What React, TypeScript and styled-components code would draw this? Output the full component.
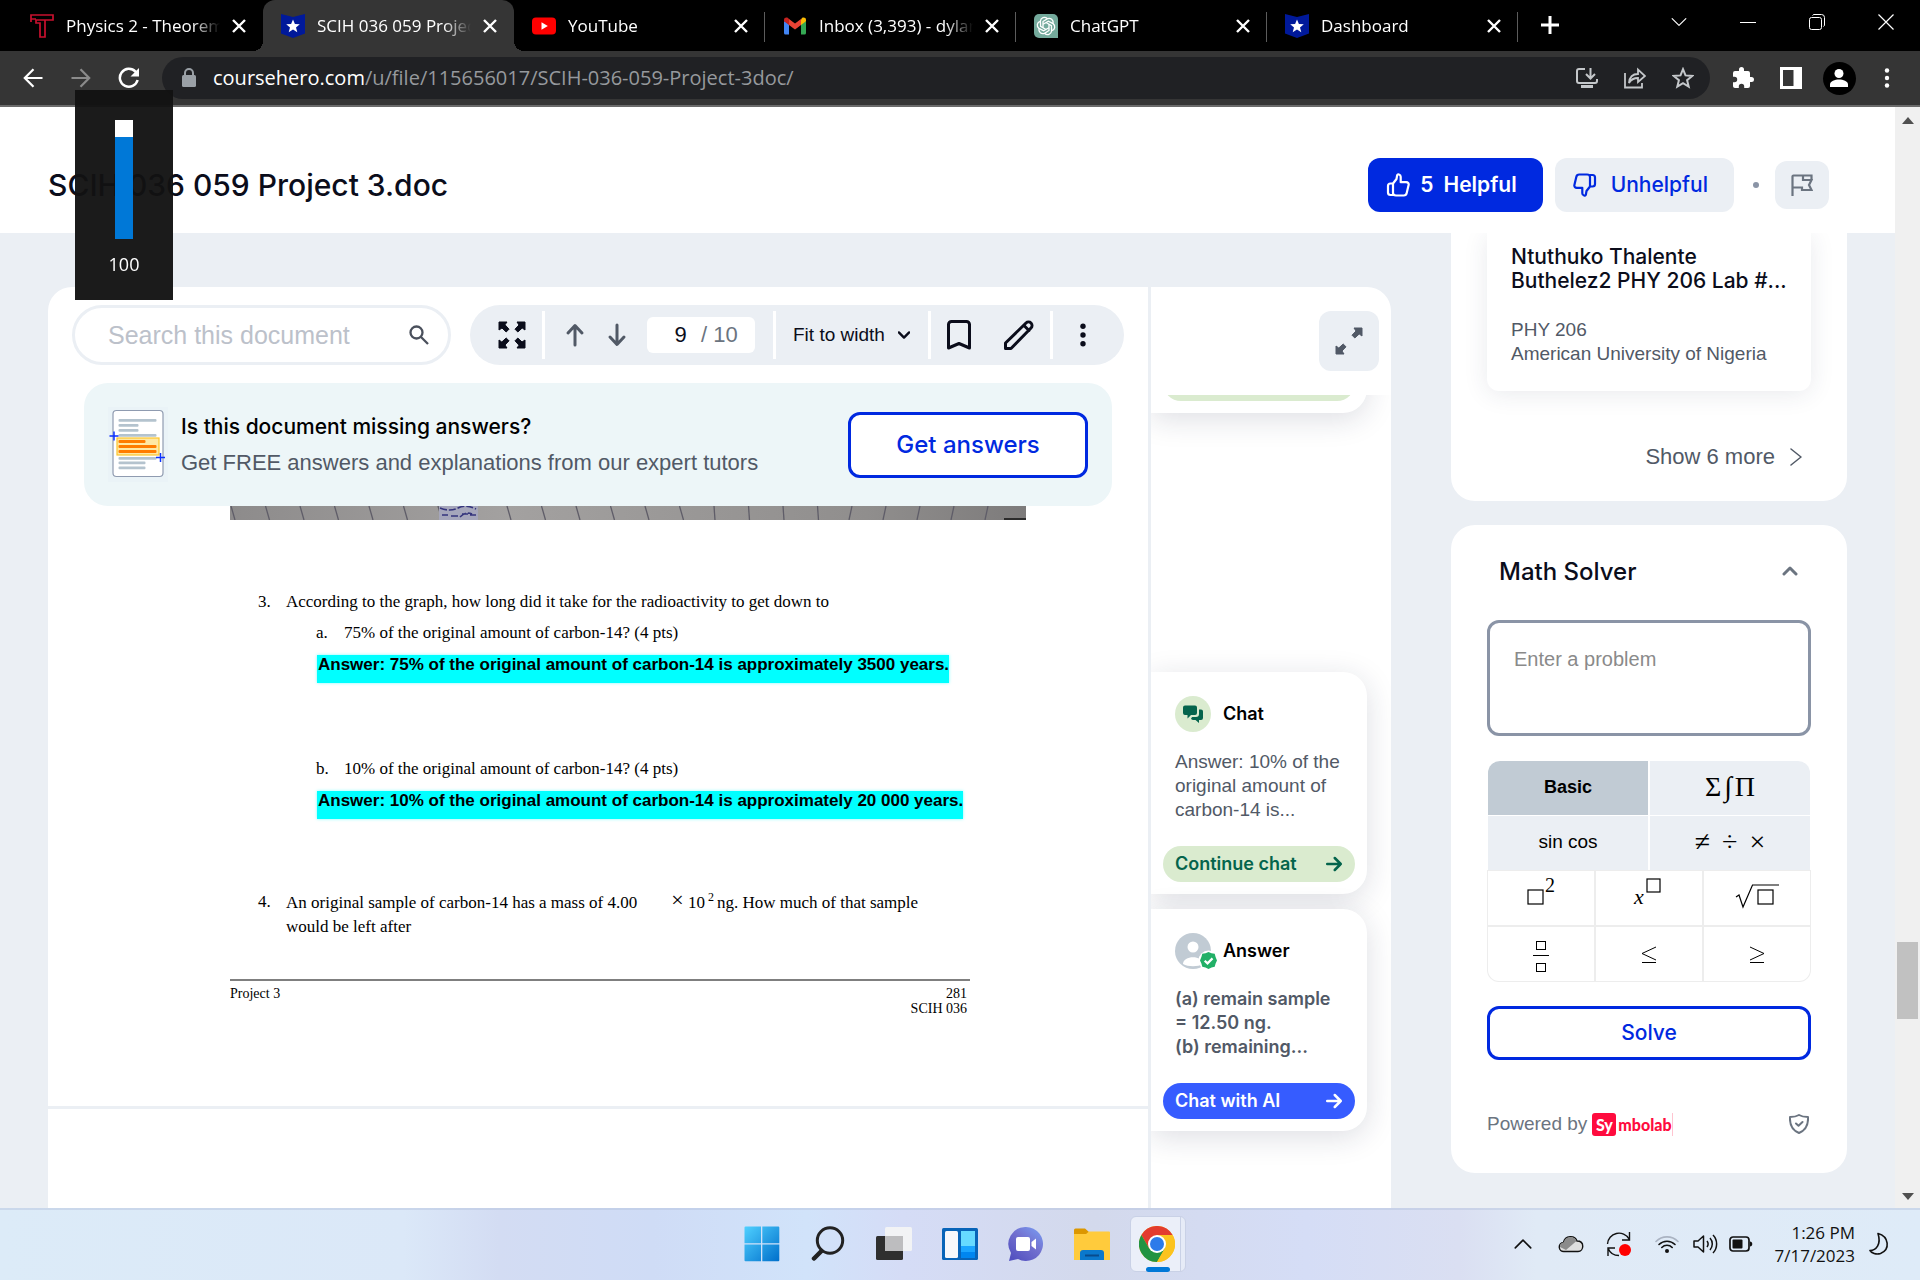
import React from "react";
import styled, { createGlobalStyle, css } from "styled-components";

const inter = `Inter, "Liberation Sans", sans-serif`;
const sans = `"Liberation Sans", Arial, sans-serif`;
const system = `"Open Sans", "Noto Sans", sans-serif`;
const serif = `"Liberation Serif", "Times New Roman", serif`;

const blue = "#0029e0";
const ink = "#0b0d1b";
const slate = "#515966";
const mist = "#ebeff4";

const GlobalStyle = createGlobalStyle`
  *, *::before, *::after { box-sizing: border-box; }
  body { margin: 0; background: ${mist}; font-family: ${sans}; color: ${ink}; overflow: hidden; }
  button { border: 0; padding: 0; background: none; font: inherit; color: inherit; cursor: pointer; }
  h1, h2, h3, p, ol { margin: 0; padding: 0; font-weight: 400; }
  a { color: inherit; text-decoration: none; }
  svg { display: block; flex: none; }
`;

const Screen = styled.div`
  height: 100vh;
  display: flex;
  flex-direction: column;
`;

/* ---------- browser frame ---------- */

const TabStrip = styled.div`
  flex: none;
  height: 51px;
  display: flex;
  background: #000;
  color: #fff;
  padding-left: 12px;
`;

const Tab = styled.div<{ $active?: boolean; $divider?: boolean }>`
  position: relative;
  width: 251px;
  display: flex;
  align-items: center;
  gap: 12px;
  padding: 0 17px 0 18px;
  ${(p) =>
    p.$active &&
    css`
      background: #353535;
      border-radius: 12px 12px 0 0;
      &::before,
      &::after {
        content: "";
        position: absolute;
        bottom: 0;
        width: 10px;
        height: 10px;
      }
      &::before {
        right: 100%;
        background: radial-gradient(circle at 0 0, transparent 10px, #353535 10px);
      }
      &::after {
        left: 100%;
        background: radial-gradient(circle at 100% 0, transparent 10px, #353535 10px);
      }
    `}
  ${(p) =>
    p.$divider &&
    css`
      &::after {
        content: "";
        position: absolute;
        right: 0;
        top: 12px;
        height: 30px;
        width: 1px;
        background: #5c5c5c;
      }
    `}
`;

const TabTitle = styled.span`
  flex: 1;
  min-width: 0;
  overflow: hidden;
  white-space: nowrap;
  font: 17px/24px ${system};
  mask-image: linear-gradient(90deg, #000 82%, transparent 100%);
`;

const IconButton = styled.button<{ $w?: number; $h?: number }>`
  flex: none;
  width: ${(p) => p.$w ?? 48}px;
  height: ${(p) => p.$h ?? 42}px;
  display: flex;
  align-items: center;
  justify-content: center;
`;

const NewTab = styled(IconButton)`
  margin: 4px 0 0 8px;
`;

const WindowButtons = styled.div`
  display: flex;
  margin-left: auto;
`;

const AddressRow = styled.div`
  flex: none;
  height: 56px;
  display: flex;
  align-items: center;
  padding: 0 9px;
  background: #353535;
  border-bottom: 2px solid #6a6a6a;
  color: #fff;
`;

const Omnibox = styled.div`
  flex: 1;
  min-width: 0;
  height: 42px;
  margin: 0 9px;
  padding: 0 3px 0 19px;
  display: flex;
  align-items: center;
  gap: 16px;
  border-radius: 21px;
  background: #202124;
  color: #c4c7ca;
`;

const Address = styled.div`
  flex: 1;
  min-width: 0;
  white-space: nowrap;
  font: 20px/28px ${system};
  color: #96999d;
  b { font-weight: 400; color: #fff; }
`;

const OmniActions = styled.div`
  display: flex;
`;

const Avatar = styled.span`
  width: 33px;
  height: 33px;
  border-radius: 50%;
  background: #000;
  display: grid;
  place-items: center;
`;

/* ---------- page frame ---------- */

const Viewport = styled.div`
  flex: 1;
  min-height: 0;
  display: flex;
  background: ${mist};
`;

const Page = styled.main`
  flex: 1;
  min-width: 0;
  display: flex;
  flex-direction: column;
  overflow: hidden;
`;

const Scrollbar = styled.div`
  flex: none;
  width: 25px;
  background: #f0f0f0;
  display: flex;
  flex-direction: column;
  align-items: center;
  padding: 9px 0 7px;
`;

const Thumb = styled.div`
  width: 21px;
  height: 77px;
  margin-top: auto;
  margin-bottom: 174px;
  background: #c1c1c1;
`;

const PageHeader = styled.header`
  flex: none;
  height: 126px;
  padding: 30px 66px 0 48px;
  display: flex;
  align-items: center;
  background: #fff;
`;

const Title = styled.h1`
  flex: 1;
  font: 500 30px/42px ${inter};
`;

const RateButton = styled.button<{ $filled?: boolean }>`
  height: 54px;
  padding: 0 26px 0 18px;
  display: flex;
  align-items: center;
  gap: ${(p) => (p.$filled ? 10 : 14)}px;
  border-radius: 12px;
  background: ${(p) => (p.$filled ? blue : mist)};
  color: ${(p) => (p.$filled ? "#fff" : blue)};
  font: ${(p) => (p.$filled ? 600 : 500)} 21px/30px ${inter};
  & + & { margin-left: 12px; }
`;

const Dot = styled.span`
  width: 6px;
  height: 6px;
  margin: 0 16px 0 19px;
  border-radius: 50%;
  background: #8a94a6;
`;

const SoftButton = styled.button<{ $size: number; $h: number }>`
  width: ${(p) => p.$size}px;
  height: ${(p) => p.$h}px;
  display: grid;
  place-items: center;
  border-radius: 12px;
  background: ${mist};
  color: ${slate};
`;

const Columns = styled.div`
  flex: 1;
  min-height: 0;
  display: flex;
  align-items: stretch;
  gap: 60px;
  padding: 0 48px;
`;

/* ---------- document viewer ---------- */

const Viewer = styled.section`
  flex: 1;
  min-width: 0;
  margin-top: 54px;
  display: flex;
  border-radius: 24px 24px 0 0;
  background: #fff;
  overflow: hidden;
`;

const Reader = styled.div`
  flex: 1;
  min-width: 0;
  display: flex;
  flex-direction: column;
`;

const ToolRow = styled.div`
  display: flex;
  gap: 19px;
  padding: 18px 24px;
`;

const SearchBox = styled.label`
  width: 379px;
  height: 60px;
  display: flex;
  align-items: center;
  padding: 0 19px 0 33px;
  border: 3px solid ${mist};
  border-radius: 30px;
  color: #4a505c;
`;

const SearchInput = styled.input`
  flex: 1;
  min-width: 0;
  border: 0;
  padding: 0;
  outline: 0;
  background: none;
  font: 25px/36px ${sans};
  &::placeholder { color: #bcc1ca; opacity: 1; }
`;

const ToolPill = styled.div`
  flex: 1;
  height: 60px;
  display: flex;
  align-items: center;
  border-radius: 30px;
  background: ${mist};
`;

const ToolGroup = styled.div<{ $pad: string; $gap?: number; $grow?: boolean }>`
  height: 48px;
  flex: ${(p) => (p.$grow ? 1 : "none")};
  display: flex;
  align-items: center;
  gap: ${(p) => p.$gap ?? 0}px;
  padding: ${(p) => p.$pad};
  & + & { border-left: 3px solid #fff; }
`;

const PageBox = styled.label`
  width: 108px;
  height: 36px;
  display: flex;
  align-items: center;
  border-radius: 6px;
  background: #fff;
  font: 22px/30px ${sans};
  color: #6b7480;
`;

const PageInput = styled.input`
  width: 54px;
  padding: 0 0 0 13px;
  border: 0;
  outline: 0;
  background: none;
  text-align: center;
  font: inherit;
  color: ${ink};
`;

const ZoomSelect = styled.select`
  flex: 1;
  min-width: 0;
  appearance: none;
  border: 0;
  padding: 0;
  outline: 0;
  background: none;
  font: 19px/24px ${sans};
  color: ${ink};
`;

const Banner = styled.aside`
  height: 123px;
  margin: 0 36px;
  padding: 0 24px;
  display: flex;
  align-items: center;
  gap: 13px;
  border-radius: 24px;
  background: #edf6f8;
`;

const BannerText = styled.div`
  flex: 1;
`;

const BannerTitle = styled.h2`
  font: 500 21px/36px ${inter};
  color: #000;
`;

const BannerNote = styled.p`
  font: 22px/36px ${sans};
  color: ${slate};
`;

const OutlineButton = styled.button<{ $w?: string; $h: number; $size: number }>`
  width: ${(p) => p.$w ?? "100%"};
  height: ${(p) => p.$h}px;
  border: 3px solid ${blue};
  border-radius: 12px;
  background: #fff;
  color: ${blue};
  font: 500 ${(p) => p.$size}px/30px ${inter};
`;

const Sheet = styled.article`
  padding: 0 122px 90px 182px;
  border-bottom: 3px solid ${mist};
  font: 17px/24px ${serif};
  color: #000;
`;

const Line = styled.p<{ $top: number; $inset?: number }>`
  display: grid;
  grid-template-columns: 28px 1fr;
  margin-top: ${(p) => p.$top}px;
  padding-left: ${(p) => (p.$inset ? 86 : 28)}px;
`;

const Highlight = styled.p`
  width: fit-content;
  margin: 10px 0 0 87px;
  padding: 0 0 8px 1px;
  background: #00ffff;
  box-shadow: 0 0 3px #7dfbff;
  font: bold 17px/20px ${sans};
`;

const Times = styled.span`
  margin-left: 34px;
  font-size: 22px;
  line-height: 20px;
  vertical-align: 1px;
`;

const Sup = styled.sup`
  margin: 0 3px;
  font-size: 12px;
  line-height: 12px;
`;

const SheetFooter = styled.footer`
  width: 740px;
  margin-top: 40px;
  padding-top: 5px;
  display: flex;
  justify-content: space-between;
  border-top: 2px solid #7f7f7f;
  font: 14px/15px ${serif};
`;

const FooterRight = styled.div`
  padding-right: 3px;
  text-align: right;
`;

/* ---------- chat rail ---------- */

const Rail = styled.div`
  flex: none;
  width: 243px;
  display: flex;
  flex-direction: column;
  border-left: 3px solid ${mist};
`;

const RailTop = styled.div`
  flex: none;
  height: 108px;
  padding: 24px 12px;
  display: flex;
  justify-content: flex-end;
`;

const RailFeed = styled.div`
  flex: 1;
  min-height: 0;
  overflow: hidden;
`;

const ChatCard = styled.section<{ $top: number }>`
  width: 216px;
  height: 222px;
  margin-top: ${(p) => p.$top}px;
  padding: 24px 12px 12px;
  display: flex;
  flex-direction: column;
  border-radius: 0 24px 24px 0;
  background: #fff;
  box-shadow: 0 6px 30px rgba(30, 36, 70, 0.15);
`;

const ChatHead = styled.h3`
  height: 36px;
  padding-left: 12px;
  display: flex;
  align-items: center;
  gap: 12px;
  font: 600 18px/24px ${inter};
  color: #000;
`;

const ChatText = styled.p<{ $bold?: boolean }>`
  margin: 18px 0 24px;
  padding-left: 12px;
  white-space: nowrap;
  font: ${(p) => (p.$bold ? `600 18px/24px ${inter}` : `19px/24px ${sans}`)};
  color: ${slate};
`;

const ChatButton = styled.button<{ $tone: "green" | "blue" }>`
  height: 36px;
  padding: 0 12px;
  display: flex;
  align-items: center;
  justify-content: space-between;
  border-radius: 18px;
  background: ${(p) => (p.$tone === "green" ? "#daebcf" : "#365cff")};
  color: ${(p) => (p.$tone === "green" ? "#04644c" : "#fff")};
  font: 600 18px/24px ${inter};
`;

/* ---------- sidebar ---------- */

const Sidebar = styled.div`
  flex: none;
  width: 396px;
`;

const RelatedPanel = styled.section`
  height: 268px;
  padding: 0 36px;
  border-radius: 0 0 24px 24px;
  background: #fff;
  overflow: hidden;
`;

const RelatedCard = styled.a`
  display: block;
  padding: 12px 20px 25px 24px;
  border-radius: 0 0 12px 12px;
  box-shadow: 0 3px 24px rgba(40, 50, 80, 0.1);
`;

const RelatedTitle = styled.h2`
  font: 500 21px/24px ${inter};
`;

const RelatedMeta = styled.p`
  margin-top: 25px;
  font: 19px/24px ${sans};
  color: ${slate};
`;

const ShowMore = styled.button`
  margin: 54px 9px 0 auto;
  display: flex;
  align-items: center;
  gap: 15px;
  font: 22px/24px ${sans};
  color: ${slate};
`;

const SolverPanel = styled.section`
  margin-top: 24px;
  padding: 29px 36px 36px;
  border-radius: 24px;
  background: #fff;
`;

const SolverHead = styled.div`
  padding: 0 13px 0 12px;
  display: flex;
  align-items: center;
  justify-content: space-between;
`;

const SolverTitle = styled.h2`
  font: 500 24px/36px ${inter};
`;

const Problem = styled.textarea`
  display: block;
  width: 100%;
  height: 116px;
  margin-top: 30px;
  padding: 24px;
  border: 3px solid #8a94a6;
  border-radius: 12px;
  outline: 0;
  resize: none;
  font: 20px/24px ${sans};
  &::placeholder { color: #8a8a8a; opacity: 1; }
`;

const KindGrid = styled.div`
  margin: 25px 1px 0;
  display: grid;
  grid-template-columns: 1fr 1fr;
  gap: 1px 2px;
  border-radius: 12px 12px 0 0;
  overflow: hidden;
`;

const Kind = styled.button<{ $on?: boolean; $math?: boolean; $gap?: number }>`
  height: 54px;
  padding-bottom: 2px;
  display: flex;
  align-items: center;
  justify-content: center;
  gap: ${(p) => p.$gap ?? 0}px;
  background: ${(p) => (p.$on ? "#c1cbd4" : mist)};
  font: ${(p) => (p.$math ? `28px/30px ${serif}` : `${p.$on ? "bold 18px" : "19px"}/24px ${sans}`)};
  color: #000;
`;

const KeyGrid = styled.div`
  display: grid;
  grid-template-columns: repeat(3, 1fr);
  gap: 2px;
  padding: 1px;
  border-radius: 0 0 12px 12px;
  background: #ededed;
  overflow: hidden;
`;

const Key = styled.button`
  height: 54px;
  display: grid;
  place-items: center;
  background: #fff;
  &:nth-child(4) { border-bottom-left-radius: 11px; }
  &:nth-child(6) { border-bottom-right-radius: 11px; }
`;

const SolveWrap = styled.div`
  margin: 24px 0 51px;
  display: flex;
`;

const Powered = styled.div`
  display: flex;
  align-items: center;
  height: 26px;
  font: 19px/24px ${sans};
  color: #6b7480;
  svg { margin-left: auto; margin-right: 2px; }
`;

const BrandLink = styled.a`
  margin-left: 5px;
  display: flex;
  align-items: center;
  gap: 2px;
  font: 900 16px/23px Lato, ${sans};
  color: #ff0b3e;
  border-right: 1px solid #ffc4d0;
`;

const BrandMark = styled.span`
  width: 24px;
  height: 23px;
  border-radius: 3px;
  background: #ff0b3e;
  color: #fff;
  text-align: center;
`;

/* ---------- volume flyout ---------- */

const Flyout = styled.div`
  position: fixed;
  left: 75px;
  top: 90px;
  width: 98px;
  height: 210px;
  padding-top: 30px;
  display: flex;
  flex-direction: column;
  align-items: center;
  background: rgba(18, 18, 18, 0.96);
  color: #fff;
  font: 18px/24px ${system};
`;

const Level = styled.div`
  width: 18px;
  height: 119px;
  margin-bottom: 13px;
  border-top: 17px solid #fff;
  background: #0078d7;
`;

/* ---------- taskbar ---------- */

const Taskbar = styled.footer`
  flex: none;
  height: 72px;
  display: grid;
  grid-template-columns: 1fr auto 1fr;
  align-items: center;
  background: linear-gradient(90deg, #dcebf8 0%, #dbe8f8 21%, #d3dcf3 26%, #cfdcf6 34%, #d1e3fa 42%, #d5dcf6 47%, #d3d9ec 57%, #d5ddf6 68%, #dadff2 76%, #e0eaf6 80%, #deebf8 100%);
  box-shadow: inset 0 2px 0 rgba(180, 192, 220, 0.45);
  color: #111;
`;

const Dock = styled.nav`
  grid-column: 2;
  display: flex;
  gap: 10px;
`;

const DockButton = styled.button<{ $open?: boolean }>`
  position: relative;
  width: 56px;
  height: 56px;
  display: grid;
  place-items: center;
  ${(p) =>
    p.$open &&
    css`
      border: 1px solid #c9d1e6;
      border-radius: 6px;
      background: linear-gradient(90deg, #ebeff9 49px, #c9d1e6 49px, #c9d1e6 50px, #e6ebf7 50px);
      padding-right: 2px;
      &::after {
        content: "";
        position: absolute;
        left: 15px;
        bottom: -1px;
        width: 24px;
        height: 5px;
        border-radius: 3px;
        background: #0078d7;
      }
    `}
`;

const Tray = styled.div`
  padding-right: 29px;
  display: flex;
  align-items: center;
  justify-content: flex-end;
`;

const TraySlot = styled.span<{ $w: number }>`
  width: ${(p) => p.$w}px;
  display: grid;
  place-items: center;
`;

const Clock = styled.div`
  width: 92px;
  margin-right: 12px;
  text-align: right;
  font: 17px/23px ${system};
`;

/* ---------- drawings ---------- */

const stroke = (w: number) => ({ fill: "none", stroke: "currentColor", strokeWidth: w, strokeLinecap: "round" as const, strokeLinejoin: "round" as const });

const CloseX = () => (
  <svg width="14" height="14" viewBox="0 0 14 14" fill="none" stroke="#fff" strokeWidth="2.4"><path d="M1 1l12 12M13 1L1 13" /></svg>
);
const HeroIcon = () => (
  <svg width="24" height="24" viewBox="0 0 24 24"><path d="M0 0l12 3 12-3v19.500l-12 4.500-12-4.500z" fill="#00199a" /><path d="M12 5.500l1.900 4.500 4.900.3-3.800 3.100 1.300 4.800-4.300-2.700-4.300 2.700 1.300-4.800L5.200 10.300l4.900-.3z" fill="#fff" /></svg>
);
const TheoremIcon = () => (
  <svg width="24" height="24" viewBox="0 0 24 24" fill="none" stroke="#c8102e" strokeWidth="1.700"><path d="M1 8V1h22v5H15v17h-5V9H6V6h9M1 5h5" /></svg>
);
const YouTubeIcon = () => (
  <svg width="24" height="24" viewBox="0 0 24 24"><rect y="3.500" width="24" height="17" rx="4" fill="#f00" /><path d="M9.500 8.300v7.400L15.800 12z" fill="#fff" /></svg>
);
const GmailIcon = () => (
  <svg width="24" height="24" viewBox="0 0 24 24"><path d="M1 7v12a1.500 1.500 0 0 0 1.500 1.500H6V10z" fill="#4285f4" /><path d="M23 7v12a1.500 1.500 0 0 1-1.500 1.500H18V10z" fill="#34a853" /><path d="M18 5.500V11l5-3.700V6c0-2.500-2.500-3-4-2z" fill="#fbbc04" /><path d="M6 11V5l6 4.500L18 5v6l-6 4.500z" fill="#ea4335" /><path d="M1 6v1.300L6 11V5L5 4C3.500 3 1 3.500 1 6z" fill="#c5221f" /></svg>
);
const GptIcon = () => (
  <svg width="24" height="24" viewBox="0 0 24 24"><path d="M5 0h14a5 5 0 0 1 5 5v19H5a5 5 0 0 1-5-5V5a5 5 0 0 1 5-5z" fill="#74aa9c" /><g fill="none" stroke="#fff" strokeWidth="1.300">{[0, 60, 120, 180, 240, 300].map((a) => <path key={a} transform={`rotate(${a} 12 12)`} d="M9 13.700V7.500L13.500 4.700a4 4 0 0 1 5.500 4.600" />)}</g></svg>
);
const ThumbIcon = ({ down }: { down?: boolean }) => (
  <svg width="24" height="24" viewBox="0 0 24 24" {...stroke(2.200)}><g transform={down ? "rotate(180 12 12)" : undefined}><path d="M7 10.500l3.500-4.500.6-3.500c.3-1.700 3.600-1.300 3.600 1.300v5.400h5.500c1.700 0 2.800 1.200 2.400 2.900l-1.900 8c-.3 1.400-1.300 2.400-2.900 2.400H10c-1.500 0-3-1-3-2.500zM7 10.500H4.500A2.500 2.500 0 0 0 2 13v6.500A2.500 2.500 0 0 0 4.500 22H7" /></g></svg>
);
const Arrow = ({ rot = 0, size = 24, w = 2.400 }: { rot?: number; size?: number; w?: number }) => (
  <svg width={size} height={size} viewBox="0 0 24 24" {...stroke(w)}><path transform={`rotate(${rot} 12 12)`} d="M3 12h18M13 4l8 8-8 8" /></svg>
);
const Chevron = ({ rot = 0, size = 14, w = 2.400 }: { rot?: number; size?: number; w?: number }) => (
  <svg width={size} height={size} viewBox="0 0 14 14" {...stroke(w)}><path transform={`rotate(${rot} 7 7)`} d="M1 4l6 6 6-6" /></svg>
);
const Dots = ({ r, gap }: { r: number; gap: number }) => (
  <svg width="8" height="24" viewBox="0 0 8 24" fill="currentColor"><circle cx="4" cy={12 - gap} r={r} /><circle cx="4" cy="12" r={r} /><circle cx="4" cy={12 + gap} r={r} /></svg>
);
const FullscreenIcon = () => (
  <svg width="28" height="28" viewBox="0 0 28 28" fill="#0b0d1b" stroke="#0b0d1b" strokeWidth="1" strokeLinejoin="round">{[0, 90, 180, 270].map((a) => <path key={a} transform={`rotate(${a} 14 14)`} d="M1 1h8L7 3.800l4 4.400L8.200 11 4 7 1 9z" />)}</svg>
);
const ExpandIcon = () => (
  <svg width="28" height="28" viewBox="0 0 28 28" fill="#515966" stroke="#515966" strokeWidth="1" strokeLinejoin="round">{[90, 270].map((a) => <path key={a} transform={`rotate(${a} 14 14)`} d="M1 1h8L7 3.800l4 4.400L8.200 11 4 7 1 9z" />)}</svg>
);
const DocumentArt = () => (
  <svg width="60" height="75" viewBox="0 0 60 75">
    <rect width="60" height="75" fill="#eaf3f7" />
    <rect x="5" y="3.500" width="50" height="66" rx="3.500" fill="#fff" stroke="#8f9bb0" strokeWidth="1.200" />
    {[[12, 38], [17, 20], [22, 20], [27, 38], [50, 38], [54.500, 27], [59.500, 27]].map(([y, w]) => <rect key={y} x="10.500" y={y} width={w} height="2.800" rx="1" fill="#b4c3ce" />)}
    <rect x="9" y="31" width="42" height="17" fill="#ffe8a3" stroke="#fcc52c" strokeWidth="1.200" />
    {[[33, 27], [38, 38], [43, 38]].map(([y, w]) => <rect key={y} x="10.500" y={y} width={w} height="3" rx="1" fill="#ff7c00" />)}
    <path d="M1.500 29h9M6 24.500v9M48 50.500h9M52.500 46v9" stroke="#0b31ff" strokeWidth="1.500" />
  </svg>
);
const PhotoStrip = () => (
  <svg width="796" height="14" viewBox="0 0 796 14">
    <defs><linearGradient id="photo"><stop offset="0" stopColor="#8d8b8b" /><stop offset=".35" stopColor="#a3a1a0" /><stop offset=".8" stopColor="#908e8d" /><stop offset="1" stopColor="#7d7b7b" /></linearGradient></defs>
    <rect width="796" height="14" fill="url(#photo)" />
    {Array.from({ length: 23 }, (_, i) => <path key={i} d={`M${i < 18 ? i * 34.500 + 1 : i * 34 + 10} 0l${i < 14 ? 4 : i < 18 ? 1 : -3} 14`} stroke="#5f5d68" strokeWidth="1.300" />)}
    <rect x="209" width="39" height="14" fill="#a5a6bb" />
    <path d="M210 2q10 4 18 0t18 1M212 9h6m3 1h8m3-2h6m2 1h6M230 11q6-6 12-3" fill="none" stroke="#35357d" strokeWidth="1.600" strokeDasharray="7 2" />
    <path d="M774 13h22" stroke="#111" strokeWidth="1.500" />
  </svg>
);

const tabs = [
  { title: "Physics 2 - Theorem", icon: <TheoremIcon /> },
  { title: "SCIH 036 059 Project", icon: <HeroIcon />, active: true },
  { title: "YouTube", icon: <YouTubeIcon />, divider: true },
  { title: "Inbox (3,393) - dylan", icon: <GmailIcon />, divider: true },
  { title: "ChatGPT", icon: <GptIcon />, divider: true },
  { title: "Dashboard", icon: <HeroIcon />, divider: true },
];

function Browser() {
  return (
    <>
      <TabStrip>
        {tabs.map((t) => (
          <Tab key={t.title} $active={t.active} $divider={t.divider}>
            {t.icon}
            <TabTitle>{t.title}</TabTitle>
            <IconButton $w={14} $h={24} aria-label="Close tab"><CloseX /></IconButton>
          </Tab>
        ))}
        <NewTab aria-label="New tab"><svg width="20" height="20" viewBox="0 0 20 20" stroke="#fff" strokeWidth="3"><path d="M10 1v18M1 10h18" /></svg></NewTab>
        <WindowButtons>
          <IconButton $w={69} $h={44} aria-label="Search tabs"><Chevron size={16} w={1} /></IconButton>
          <IconButton $w={69} $h={44} aria-label="Minimize"><svg width="16" height="16" viewBox="0 0 16 16" stroke="#fff"><path d="M0 8.500h16" /></svg></IconButton>
          <IconButton $w={69} $h={44} aria-label="Restore"><svg width="16" height="16" viewBox="0 0 16 16" fill="none" stroke="#fff"><rect x=".5" y="3.500" width="12" height="12" rx="2" /><path d="M3.500 1.500a2 2 0 0 1 1.500-1h7.500a3 3 0 0 1 3 3V11a2 2 0 0 1-1 1.500" /></svg></IconButton>
          <IconButton $w={69} $h={44} aria-label="Close"><svg width="16" height="16" viewBox="0 0 16 16" stroke="#fff" strokeWidth="1.200"><path d="M.5.5l15 15M15.500.5l-15 15" /></svg></IconButton>
        </WindowButtons>
      </TabStrip>
      <AddressRow>
        <IconButton aria-label="Back"><svg width="20" height="20" viewBox="0 0 20 20" fill="none" stroke="#fff" strokeWidth="2.200"><path d="M19.500 10H2M10.500 1.200L1.800 10l8.700 8.800" /></svg></IconButton>
        <IconButton aria-label="Forward"><svg width="20" height="20" viewBox="0 0 20 20" fill="none" stroke="#8b8b8b" strokeWidth="2.200"><path d="M.5 10H18M9.500 1.200l8.700 8.800-8.700 8.800" /></svg></IconButton>
        <IconButton aria-label="Reload"><svg width="22" height="22" viewBox="0 0 22 22" fill="none" stroke="#fff" strokeWidth="2.500"><path d="M19.600 13A9 9 0 1 1 17.500 4.700L20 7.500" /><path d="M21 1v8.500h-8.500z" fill="#fff" stroke="none" /></svg></IconButton>
        <Omnibox>
          <svg width="16" height="20" viewBox="0 0 16 20"><rect x="1" y="7" width="14" height="12" rx="1.500" fill="#9aa0a6" /><path d="M4 8V5a4 4 0 0 1 8 0v3" fill="none" stroke="#9aa0a6" strokeWidth="2" /></svg>
          <Address><b>coursehero.com</b>/u/file/115656017/SCIH-036-059-Project-3doc/</Address>
          <OmniActions>
            <IconButton aria-label="Install"><svg width="22" height="22" viewBox="0 0 22 22" fill="none" stroke="currentColor" strokeWidth="2"><path d="M9 2H3a2 2 0 0 0-2 2v10a2 2 0 0 0 2 2h16a2 2 0 0 0 2-2v-2M14.500 1v10M10 7l4.500 4.500L19 7" /><path d="M5 18h12v3H5z" fill="currentColor" stroke="none" /></svg></IconButton>
            <IconButton aria-label="Share"><svg width="22" height="22" viewBox="0 0 22 22" fill="none" stroke="currentColor" strokeWidth="1.800"><path d="M1 6v14.500h17V16M5 16c.5-6 4-9 9-9V2.500L21 9l-7 6v-4c-4 0-7 1.500-9 5z" /></svg></IconButton>
            <IconButton aria-label="Bookmark page"><svg width="22" height="22" viewBox="0 0 22 22" fill="none" stroke="currentColor" strokeWidth="2"><path d="M11 2.200l2.500 6.200 6.700.5-5.100 4.300 1.600 6.500L11 16.200l-5.700 3.500 1.600-6.500L1.800 8.900l6.700-.5z" /></svg></IconButton>
          </OmniActions>
        </Omnibox>
        <IconButton aria-label="Extensions"><svg width="24" height="24" viewBox="0 0 24 24" fill="#fff"><path d="M20.500 11H19V7a2 2 0 0 0-2-2h-4V3.500a2.500 2.500 0 0 0-5 0V5H4a2 2 0 0 0-2 2v3.800h1.500a2.700 2.700 0 0 1 0 5.400H2V20c0 1.100.9 2 2 2h3.800v-1.500a2.700 2.700 0 0 1 5.400 0V22H17a2 2 0 0 0 2-2v-4h1.500a2.500 2.500 0 0 0 0-5z" /></svg></IconButton>
        <IconButton aria-label="Side panel"><svg width="22" height="22" viewBox="0 0 22 22"><path d="M0 0h22v22H0z" fill="#fff" /><path d="M3 3h10.500v16H3z" fill="#353535" /></svg></IconButton>
        <IconButton aria-label="Profile"><Avatar><svg width="20" height="20" viewBox="0 0 20 20" fill="#fff"><circle cx="10" cy="5.500" r="4.500" /><path d="M1 19v-2.500C1 13 6 11.500 10 11.500s9 1.500 9 5V19z" /></svg></Avatar></IconButton>
        <IconButton aria-label="Menu"><Dots r={2.200} gap={7.500} /></IconButton>
      </AddressRow>
    </>
  );
}

function Reading() {
  return (
    <Reader>
      <ToolRow>
        <SearchBox>
          <SearchInput aria-label="Search this document" placeholder="Search this document" />
          <svg width="20" height="20" viewBox="0 0 20 20" fill="none" stroke="currentColor" strokeWidth="2.300"><circle cx="7.500" cy="7.500" r="6" /><path d="M12 12l7 7" /></svg>
        </SearchBox>
        <ToolPill>
          <ToolGroup $pad="0 16px 0 28px"><IconButton $w={28} aria-label="Full screen"><FullscreenIcon /></IconButton></ToolGroup>
          <ToolGroup $pad="0 18px" $gap={18}>
            <IconButton $w={24} aria-label="Previous page"><svg width="24" height="24" viewBox="0 0 24 24" {...stroke(3)} stroke={slate}><path d="M12 22V3M5 10l7-7.500L19 10" /></svg></IconButton>
            <IconButton $w={24} aria-label="Next page"><svg width="24" height="24" viewBox="0 0 24 24" {...stroke(3)} stroke={slate}><path d="M12 2v19M5 14l7 7.500 7-7.500" /></svg></IconButton>
            <PageBox><PageInput aria-label="Page" defaultValue="9" />/ 10</PageBox>
          </ToolGroup>
          <ToolGroup $pad="0 18px 0 17px" $grow>
            <ZoomSelect aria-label="Zoom"><option>Fit to width</option></ZoomSelect>
            <Chevron size={12} w={2.800} />
          </ToolGroup>
          <ToolGroup $pad="0 16px" $gap={33}>
            <IconButton $w={24} aria-label="Bookmark"><svg width="24" height="30" viewBox="0 0 24 30" {...stroke(3)}><path d="M1.500 28V4.500a3 3 0 0 1 3-3h15a3 3 0 0 1 3 3V28L12 23.500z" /></svg></IconButton>
            <IconButton $w={30} aria-label="Annotate"><svg width="30" height="30" viewBox="0 0 30 30" {...stroke(3)}><path d="M1.500 28.500v-5.500L22 3a3.600 3.600 0 0 1 5 0 3.600 3.600 0 0 1 0 5L7 28.500zM20 5.500l5 5" /></svg></IconButton>
          </ToolGroup>
          <ToolGroup $pad="0 37px 0 26px"><IconButton $w={8} aria-label="More"><Dots r={2.700} gap={8.700} /></IconButton></ToolGroup>
        </ToolPill>
      </ToolRow>
      <Banner>
        <DocumentArt />
        <BannerText>
          <BannerTitle>Is this document missing answers?</BannerTitle>
          <BannerNote>Get FREE answers and explanations from our expert tutors</BannerNote>
        </BannerText>
        <OutlineButton $w="240px" $h={66} $size={24}>Get answers</OutlineButton>
      </Banner>
      <Sheet>
        <PhotoStrip />
        <Line $top={70}><span>3.</span><span>According to the graph, how long did it take for the radioactivity to get down to</span></Line>
        <Line $top={7} $inset={1}><span>a.</span><span>75% of the original amount of carbon-14? (4 pts)</span></Line>
        <Highlight>Answer: 75% of the original amount of carbon-14 is approximately 3500 years.</Highlight>
        <Line $top={74} $inset={1}><span>b.</span><span>10% of the original amount of carbon-14? (4 pts)</span></Line>
        <Highlight>Answer: 10% of the original amount of carbon-14 is approximately 20 000 years.</Highlight>
        <Line $top={71}><span>4.</span><span>An original sample of carbon-14 has a mass of 4.00<Times>×</Times> 10<Sup>2</Sup>ng. How much of that sample<br />would be left after</span></Line>
        <SheetFooter><span>Project 3</span><FooterRight>281<br />SCIH 036</FooterRight></SheetFooter>
      </Sheet>
    </Reader>
  );
}

function ChatRail() {
  return (
    <Rail>
      <RailTop><SoftButton $size={60} $h={60} aria-label="Expand panel"><ExpandIcon /></SoftButton></RailTop>
      <RailFeed>
        <ChatCard $top={-204}>
          <ChatHead />
          <ChatText><br /><br /><br /></ChatText>
          <ChatButton $tone="green" aria-label="Continue chat" />
        </ChatCard>
        <ChatCard $top={259}>
          <ChatHead>
            <svg width="36" height="36" viewBox="0 0 36 36"><circle cx="18" cy="18" r="18" fill="#daebcf" /><path d="M10 9.500h10a2 2 0 0 1 2 2V17a2 2 0 0 1-2 2h-4l-3.500 3.500V19H10a2 2 0 0 1-2-2v-5.500a2 2 0 0 1 2-2z" fill="#04644c" /><path d="M24 13.500h2a2 2 0 0 1 2 2V22a2 2 0 0 1-2 2h-2v3l-3.500-3H18a2 2 0 0 1-2-1.800l1.300-1.200H21a3 3 0 0 0 3-3z" fill="#04644c" /></svg>
            Chat
          </ChatHead>
          <ChatText>Answer: 10% of the<br />original amount of<br />carbon-14 is...</ChatText>
          <ChatButton $tone="green">Continue chat<Arrow size={18} w={3.400} /></ChatButton>
        </ChatCard>
        <ChatCard $top={15}>
          <ChatHead>
            <svg width="36" height="36" viewBox="0 0 36 36" overflow="visible"><circle cx="18" cy="18" r="18" fill="#c1cbd4" /><circle cx="18" cy="14" r="5.500" fill="#fff" /><path d="M8 31c0-9 20-9 20 0-5 3-15 3-20 0z" fill="#fff" /><circle cx="33.500" cy="27.500" r="10" fill="#fff" /><path d="M33.500 19l3 1.300 3.200.4.900 3.200 1.400 3.600-1.400 3-.9 3.200-3.200.9-3 1.400-3-1.400-3.200-.9-.9-3.200-1.400-3 1.400-3.600.9-3.200 3.200-.4z" fill="#22b067" /><path d="M29.700 27.800l2.800 2.600 5-5" fill="none" stroke="#fff" strokeWidth="2.200" /></svg>
            Answer
          </ChatHead>
          <ChatText $bold>(a) remain sample<br />= 12.50 ng.<br />(b) remaining...</ChatText>
          <ChatButton $tone="blue">Chat with AI<Arrow size={18} w={3.400} /></ChatButton>
        </ChatCard>
      </RailFeed>
    </Rail>
  );
}

const keyProps = { width: 56, height: 50, viewBox: "0 0 56 50", fill: "none", stroke: "#000", strokeWidth: 1.200 };

function Side() {
  return (
    <Sidebar>
      <RelatedPanel>
        <RelatedCard href="#related">
          <RelatedTitle>Ntuthuko Thalente<br />Buthelez2 PHY 206 Lab #...</RelatedTitle>
          <RelatedMeta>PHY 206<br />American University of Nigeria</RelatedMeta>
        </RelatedCard>
        <ShowMore>Show 6 more<svg width="12" height="18" viewBox="0 0 12 18" {...stroke(1.500)}><path d="M1 1l10 8-10 8" /></svg></ShowMore>
      </RelatedPanel>
      <SolverPanel>
        <SolverHead>
          <SolverTitle>Math Solver</SolverTitle>
          <IconButton $w={16} $h={24} aria-label="Collapse"><svg width="16" height="16" viewBox="0 0 16 16" {...stroke(3)} stroke="#6b7480"><path d="M2 10l6-6 6 6" /></svg></IconButton>
        </SolverHead>
        <Problem aria-label="Enter a problem" placeholder="Enter a problem" />
        <KindGrid>
          <Kind $on>Basic</Kind>
          <Kind $math $gap={3}><span>Σ</span><i>∫</i><span>Π</span></Kind>
          <Kind>sin cos</Kind>
          <Kind $math $gap={12}><span>≠</span><span>÷</span><span>×</span></Kind>
        </KindGrid>
        <KeyGrid>
          <Key aria-label="Square"><svg {...keyProps}><rect x="15" y="17" width="15" height="14" /><text x="32" y="19" fontFamily="Liberation Serif" fontSize="20" fill="#000" stroke="none">2</text></svg></Key>
          <Key aria-label="Power"><svg {...keyProps}><text x="13" y="31" fontFamily="Liberation Serif" fontStyle="italic" fontSize="22" fill="#000" stroke="none">x</text><rect x="26" y="6" width="13" height="13" /></svg></Key>
          <Key aria-label="Square root"><svg {...keyProps}><path d="M7 24l3-2 4 12L23.500 12H50" /><rect x="29" y="17" width="15" height="14" /></svg></Key>
          <Key aria-label="Fraction"><svg {...keyProps} strokeWidth={1}><rect x="23.500" y="12.500" width="9" height="8" /><path d="M20 26.500h16" /><rect x="23.500" y="34.500" width="9" height="8" /></svg></Key>
          <Key aria-label="Less than or equal"><svg {...keyProps} strokeWidth={1}><path d="M35 18l-14 6.500L35 31M21 33.500h14" /></svg></Key>
          <Key aria-label="Greater than or equal"><svg {...keyProps} strokeWidth={1}><path d="M21 18l14 6.500L21 31M21 33.500h14" /></svg></Key>
        </KeyGrid>
        <SolveWrap><OutlineButton $h={54} $size={21}>Solve</OutlineButton></SolveWrap>
        <Powered>
          Powered by
          <BrandLink href="#symbolab"><BrandMark>Sy</BrandMark>mbolab</BrandLink>
          <svg width="20" height="20" viewBox="0 0 20 20" {...stroke(2)}><path d="M10 1c2.500 1.500 5.500 2 9 2 .5 8-3 13.500-9 16C4 16.500.5 11 1 3c3.500 0 6.500-.5 9-2zM7 9.500l2.500 2.300L13.500 8" /></svg>
        </Powered>
      </SolverPanel>
    </Sidebar>
  );
}

function Desktop() {
  return (
    <Taskbar>
      <Dock>
        <DockButton aria-label="Start"><svg width="36" height="36" viewBox="0 0 36 36"><defs><linearGradient id="win" x2="1" y2="1"><stop stopColor="#4fd0ff" /><stop offset="1" stopColor="#006fcb" /></linearGradient></defs><path d="M1.500 .5H17v16.800H.5V1.500a1 1 0 0 1 1-1zM18.300.5h16a1 1 0 0 1 1 1v15.800h-17zM.5 18.600H17v16.700H1.500a1 1 0 0 1-1-1zM18.300 18.600h17v15.700a1 1 0 0 1-1 1h-16z" fill="url(#win)" /></svg></DockButton>
        <DockButton aria-label="Search"><svg width="34" height="36" viewBox="0 0 34 36" fill="none" stroke="#222" strokeLinecap="round"><circle cx="19" cy="14.500" r="12.700" strokeWidth="3" /><path d="M10.500 25L3 32.500" strokeWidth="4.500" /></svg></DockButton>
        <DockButton aria-label="Task view"><svg width="36" height="36" viewBox="0 0 36 36"><rect x="0" y="10" width="27" height="24" rx="1.500" fill="#2f2f2f" /><rect x="9" y="1" width="27" height="24" rx="1.500" fill="#f2f3f5" /><path d="M9 10h18v15H9z" fill="#bdbdbf" /></svg></DockButton>
        <DockButton aria-label="Widgets"><svg width="36" height="34" viewBox="0 0 36 34"><rect y="1" width="36" height="32" rx="1.500" fill="#0864b8" /><rect x="3" y="4" width="13" height="27" rx="1.500" fill="#f7f8fb" /><rect x="19" y="4" width="14" height="15" fill="#67daff" /><rect x="19" y="19" width="14" height="6" fill="#1ba5ff" /><rect x="19" y="25" width="14" height="6" fill="#0086f0" /></svg></DockButton>
        <DockButton aria-label="Chat"><svg width="36" height="36" viewBox="0 0 36 36"><defs><linearGradient id="teams" x1="1" x2=".2" y2="1"><stop stopColor="#7aa0f5" /><stop offset=".5" stopColor="#7270cf" /><stop offset="1" stopColor="#5351c0" /></linearGradient></defs><path d="M18 1a17 17 0 1 1-8 32L1 35l2-8A17 17 0 0 1 18 1z" fill="url(#teams)" /><rect x="8" y="11" width="14" height="14" rx="2" fill="#fff" /><path d="M23.500 16l4.500-3.500v11L23.500 20z" fill="#fff" /></svg></DockButton>
        <DockButton aria-label="File Explorer"><svg width="36" height="36" viewBox="0 0 36 36"><path d="M0 4a1.500 1.500 0 0 1 1.500-1.500H11l4 3.500v4H0z" fill="#dc9700" /><path d="M0 8h12l3-2.500h20a1 1 0 0 1 1 1V34H0z" fill="#ffcb3c" /><path d="M6 34v-7a3 3 0 0 1 3-3h18a3 3 0 0 1 3 3v7z" fill="#0a78cc" /><path d="M11 29.500h14" stroke="#084b8c" strokeWidth="2" /></svg></DockButton>
        <DockButton $open aria-label="Chrome"><svg width="36" height="36" viewBox="0 0 36 36"><circle cx="18" cy="18" r="18" fill="#fcc31e" /><path d="M2.400 9A18 18 0 0 1 33.600 9H18L10.200 22.500z" fill="#e33b2e" /><path d="M2.400 9A18 18 0 0 0 18 36l7.800-13.500H10.200z" fill="#229342" /><path d="M33.600 9A18 18 0 0 1 18 36l7.800-13.500L18 9z" fill="#fcc31e" /><circle cx="18" cy="18" r="9" fill="#fff" /><circle cx="18" cy="18" r="7" fill="#2d7bea" /></svg></DockButton>
      </Dock>
      <Tray>
        <TraySlot $w={48}><Chevron rot={180} size={18} w={1.300} /></TraySlot>
        <TraySlot $w={48}><svg width="26" height="18" viewBox="0 0 26 18"><path d="M6 16.500a4.500 4.500 0 0 1-.5-9C7 0 17 0 19 6c8 0 7 10.500 1 10.500z" fill="#dedede" stroke="#111" strokeWidth="1.400" /><path d="M2 12c0-4 3-4.500 4-5C7 1 16 0 18.500 6L8 15z" fill="#8b8b8b" /></svg></TraySlot>
        <TraySlot $w={48}><svg width="26" height="26" viewBox="0 0 26 26" fill="none" stroke="#111" strokeWidth="1.400"><path d="M1.500 13A11.500 11.500 0 0 1 23 8M23.500 1v8H16M13 24.500C8 24.500 4 22 2.500 18M2 25v-8h7" /><circle cx="19" cy="19" r="6" fill="#f00" stroke="none" /></svg></TraySlot>
        <TraySlot $w={48}><svg width="24" height="20" viewBox="0 0 24 20" fill="none" stroke="#111" strokeWidth="1.600" strokeLinecap="round"><path d="M1 7.500a15.500 15.500 0 0 1 22 0" stroke="#aab3c2" /><path d="M4 10.500a11.300 11.300 0 0 1 16 0M6.800 13.500a7.300 7.300 0 0 1 10.400 0" /><circle cx="12" cy="17" r="2" fill="#111" stroke="none" /></svg></TraySlot>
        <TraySlot $w={28}><svg width="25" height="20" viewBox="0 0 25 20" fill="none" stroke="#111" strokeWidth="1.500" strokeLinejoin="round"><path d="M1 7h4l5.500-5v16L5 13H1zM14 7a5 5 0 0 1 0 6M17 4a9 9 0 0 1 0 12M20 1a13 13 0 0 1 0 18" /></svg></TraySlot>
        <TraySlot $w={44}><svg width="24" height="16" viewBox="0 0 24 16"><rect x="1" y="1" width="19" height="14" rx="3" fill="none" stroke="#111" strokeWidth="1.700" /><rect x="3.500" y="3.500" width="10" height="9" rx="1" fill="#111" /><path d="M21 5.500c3 0 3 5 0 5z" fill="#111" /></svg></TraySlot>
        <Clock>1:26 PM<br />7/17/2023</Clock>
        <svg width="24" height="24" viewBox="0 0 24 24" fill="none" stroke="#111" strokeWidth="1.600" strokeLinejoin="round"><path d="M11 1.500c11 3 12.500 16 2.500 20C9 23 4.500 21 3 18.500c6 0 11.500-6 8-17z" /></svg>
      </Tray>
    </Taskbar>
  );
}

export default function App() {
  return (
    <Screen>
      <GlobalStyle />
      <Browser />
      <Viewport>
        <Page>
          <PageHeader>
            <Title>SCIH 036 059 Project 3.doc</Title>
            <RateButton $filled><ThumbIcon />5 <span>Helpful</span></RateButton>
            <RateButton><ThumbIcon down />Unhelpful</RateButton>
            <Dot />
            <SoftButton $size={54} $h={48} aria-label="Report"><svg width="22" height="22" viewBox="0 0 22 22" fill="none" stroke="#6b7480" strokeWidth="2.200"><path d="M1.500 22V2.500a1 1 0 0 1 1-1H12V6h8.500l-2.500 5 2.500 5H11v-2.500H2M12 1.500h8.500V6" /></svg></SoftButton>
          </PageHeader>
          <Columns>
            <Viewer>
              <Reading />
              <ChatRail />
            </Viewer>
            <Side />
          </Columns>
        </Page>
        <Scrollbar>
          <svg width="12" height="8" viewBox="0 0 12 8"><path d="M0 8l6-7 6 7z" fill="#505050" /></svg>
          <Thumb />
          <svg width="12" height="8" viewBox="0 0 12 8"><path d="M0 0l6 7 6-7z" fill="#505050" /></svg>
        </Scrollbar>
      </Viewport>
      <Desktop />
      <Flyout><Level />100</Flyout>
    </Screen>
  );
}
